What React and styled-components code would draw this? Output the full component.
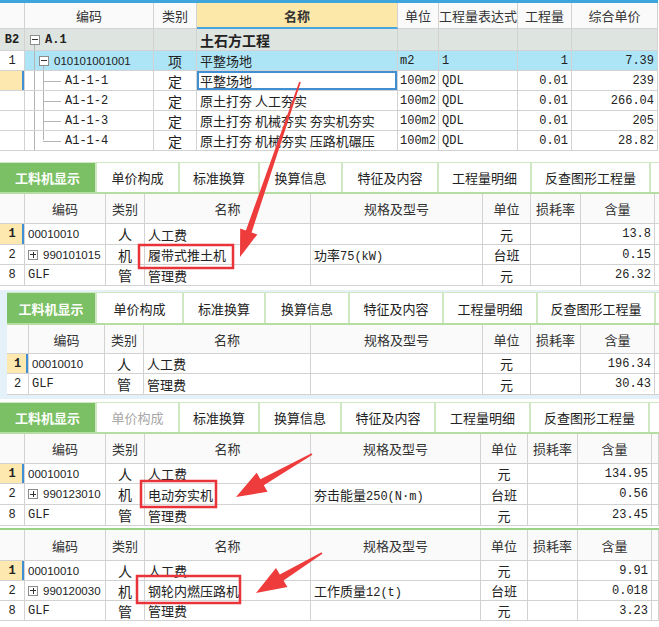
import React from "react"
import styled, { createGlobalStyle } from "styled-components"

const CJK = `"Noto Sans CJK SC", "Noto Sans", sans-serif`
const MONO = `"Liberation Mono", "Noto Sans CJK SC", monospace`
const SANS = `"Liberation Sans", Arial, sans-serif`

const GlobalStyle = createGlobalStyle`
  body { margin: 0; background: #fff; }
`

/* page + generic grid parts */
const Page = styled.div`
  position: relative;
  width: 659px;
  height: 627px;
  overflow: hidden;
  background: #fff;
  color: #222;
  font-family: ${CJK};
  font-size: 13px;
`

const Row = styled.div`
  display: grid;
  grid-template-columns: ${p => p.$cols};
  height: ${p => p.$h}px;
  background: ${p => p.$bg || "transparent"};
`

const Cell = styled.div`
  box-sizing: border-box;
  position: relative;
  display: flex;
  align-items: center;
  justify-content: ${p => (p.$align === "right" ? "flex-end" : p.$align === "center" ? "center" : "flex-start")};
  padding: 0 ${p => (p.$pad !== undefined ? p.$pad : 3)}px;
  border-right: 1px solid #d2d2d2;
  border-bottom: 1px solid #d2d2d2;
  background: ${p => p.$bg || "transparent"};
  font-family: ${p => (p.$mono ? MONO : p.$sans ? SANS : CJK)};
  font-size: ${p => (p.$size ? p.$size : p.$sans ? 11.5 : p.$mono ? 12 : 13)}px;
  font-weight: ${p => (p.$bold ? 700 : 400)};
  color: ${p => p.$color || "#222"};
  white-space: nowrap;
  overflow: hidden;
  box-shadow: ${p => (p.$selected ? "inset 0 0 0 2px #3f8fd2" : p.$mark ? "inset -2px 0 0 #3f8fd2" : "none")};
`

const HeadCell = styled(Cell)`
  justify-content: center;
  background: ${p => (p.$hl ? "#fce8a8" : "#fafafa")};
  font-weight: ${p => (p.$hl ? 700 : 400)};
  border-bottom: ${p => (p.$hl ? "2px solid #4aa5de" : "1px solid #d2d2d2")};
  color: #333;
`

const Mono = styled.span`
  font-family: ${MONO};
  font-size: 12px;
`

/* tree guides in the code column */
const VLine = styled.span`
  position: absolute;
  left: ${p => p.$x}px;
  top: ${p => p.$top}px;
  bottom: ${p => p.$bottom}px;
  width: 1px;
  background: #b4b4b4;
`

const HLine = styled.span`
  position: absolute;
  left: ${p => p.$x}px;
  top: 50%;
  width: ${p => p.$w}px;
  height: 1px;
  background: #b4b4b4;
`

const Toggle = styled.span`
  position: relative;
  flex: none;
  box-sizing: border-box;
  width: 10px;
  height: 10px;
  margin-right: 5px;
  border: 1px solid #8c8c8c;
  background: #fff;
  &::before {
    content: "";
    position: absolute;
    left: 1px;
    right: 1px;
    top: 3.5px;
    height: 1px;
    background: #333;
  }
  &::after {
    content: "";
    display: ${p => (p.$plus ? "block" : "none")};
    position: absolute;
    top: 1px;
    bottom: 1px;
    left: 3.5px;
    width: 1px;
    background: #333;
  }
`

/* top grid */
const TOP_COLS = "25px 129px 43px 201px 41px 79px 54px 1fr"

const TopGrid = styled.div`
  border-top: 3px solid #3ea6dd;
  margin-right: 1px;
`

const topRows = [
  { code: "A1-1-1", name: "平整场地", expr: "0.01", price: "239", selected: true },
  { code: "A1-1-2", name: "原土打夯 人工夯实", expr: "0.01", price: "266.04" },
  { code: "A1-1-3", name: "原土打夯 机械夯实 夯实机夯实", expr: "0.01", price: "205" },
  { code: "A1-1-4", name: "原土打夯 机械夯实 压路机碾压", expr: "0.01", price: "28.82", last: true },
]

function Top() {
  return (
    <TopGrid>
      <Row $cols={TOP_COLS} $h={26}>
        <HeadCell />
        <HeadCell>编码</HeadCell>
        <HeadCell>类别</HeadCell>
        <HeadCell $hl>名称</HeadCell>
        <HeadCell>单位</HeadCell>
        <HeadCell $pad={0}>工程量表达式</HeadCell>
        <HeadCell>工程量</HeadCell>
        <HeadCell>综合单价</HeadCell>
      </Row>
      <Row $cols={TOP_COLS} $h={22} $bg="#dee4e0">
        <Cell $mono $bold $align="center" $pad={0}>B2</Cell>
        <Cell $mono $bold $pad={5}>
          <VLine $x={9} $top={16} $bottom={-1} />
          <Toggle />A.1
        </Cell>
        <Cell />
        <Cell $bold $size={14}>土石方工程</Cell>
        <Cell /><Cell /><Cell /><Cell />
      </Row>
      <Row $cols={TOP_COLS} $h={20} $bg="#ade5f7">
        <Cell $mono $align="center" $bg="#fff">1</Cell>
        <Cell $sans $pad={14}>
          <VLine $x={9} $top={0} $bottom={-1} />
          <VLine $x={18} $top={15} $bottom={-1} />
          <Toggle />010101001001
        </Cell>
        <Cell $align="center" $size={14}>项</Cell>
        <Cell>平整场地</Cell>
        <Cell $mono $pad={2}>m2</Cell>
        <Cell $mono>1</Cell>
        <Cell $mono $align="right">1</Cell>
        <Cell $mono $align="right">7.39</Cell>
      </Row>
      {topRows.map(r => (
        <Row key={r.code} $cols={TOP_COLS} $h={20}>
          <Cell $bg={r.selected ? "#fde8b0" : "transparent"} $mark={r.selected} />
          <Cell $mono $pad={40}>
            <VLine $x={9} $top={0} $bottom={-1} />
            <VLine $x={18} $top={0} $bottom={r.last ? 10 : -1} />
            <HLine $x={18} $w={18} />
            {r.code}
          </Cell>
          <Cell $align="center" $size={14}>定</Cell>
          <Cell $selected={r.selected}>{r.name}</Cell>
          <Cell $mono $pad={2}>100m2</Cell>
          <Cell $mono>QDL</Cell>
          <Cell $mono $align="right">{r.expr}</Cell>
          <Cell $mono $align="right">{r.price}</Cell>
        </Row>
      ))}
    </TopGrid>
  )
}

/* tab bar */
const TabBar = styled.div`
  display: flex;
  box-sizing: border-box;
  height: ${p => p.$h}px;
  margin-top: ${p => p.$top || 0}px;
  border-top: 1px solid #cfe8c3;
  border-bottom: 2px solid #b6dea3;
  background: #fff;
`

const Tab = styled.div`
  flex: none;
  box-sizing: border-box;
  display: flex;
  align-items: center;
  justify-content: center;
  width: ${p => p.$w}px;
  border-right: 2px solid #cfe8c3;
  background: ${p => (p.$active ? "#7bc064" : "transparent")};
  color: ${p => (p.$active ? "#fff" : p.$dim ? "#a8a8a8" : "#222")};
  font-weight: ${p => (p.$active ? 700 : 400)};
  font-size: 13px;
`

const TAB_LABELS = ["工料机显示", "单价构成", "标准换算", "换算信息", "特征及内容", "工程量明细", "反查图形工程量"]

function Tabs({ widths, h, top, dimSecond }) {
  return (
    <TabBar $h={h} $top={top}>
      {TAB_LABELS.map((t, i) => (
        <Tab key={t} $w={widths[i]} $active={i === 0} $dim={dimSecond && i === 1}>{t}</Tab>
      ))}
    </TabBar>
  )
}

/* resource (工料机) table */
const Section = styled.div`
  margin-top: ${p => p.$top || 0}px;
  padding: ${p => (p.$inset ? `2px 0 4px ${p.$inset}px` : "0")};
  background: ${p => (p.$inset ? "#e4f1f8" : "transparent")};
  border-top: ${p => (p.$line ? "2px solid #9ad486" : "none")};
`

const Inner = styled.div`
  background: #fff;
`

function Code({ r }) {
  if (r.plus) {
    return (
      <Cell $sans $pad={3}>
        <Toggle $plus />{r.code}
      </Cell>
    )
  }
  return r.code === "GLF" ? <Cell $mono>GLF</Cell> : <Cell $sans>{r.code}</Cell>
}

function ResTable({ cols, headH, heights, rows }) {
  return (
    <div>
      <Row $cols={cols} $h={headH}>
        <HeadCell />
        <HeadCell>编码</HeadCell>
        <HeadCell>类别</HeadCell>
        <HeadCell>名称</HeadCell>
        <HeadCell>规格及型号</HeadCell>
        <HeadCell>单位</HeadCell>
        <HeadCell>损耗率</HeadCell>
        <HeadCell>含量</HeadCell>
        <HeadCell />
      </Row>
      {rows.map((r, i) => (
        <Row key={i} $cols={cols} $h={heights[i]}>
          <Cell $mono $align="center" $pad={0} $bold={r.no === "1"} $bg={r.no === "1" ? "#fde8b0" : "transparent"} $mark={r.no === "1"}>{r.no}</Cell>
          <Code r={r} />
          <Cell $align="center" $size={14}>{r.type}</Cell>
          <Cell>{r.name}</Cell>
          <Cell>
            {r.spec && <span>{r.spec[0]}<Mono>{r.spec[1]}</Mono></span>}
          </Cell>
          <Cell $align="center">{r.unit}</Cell>
          <Cell />
          <Cell $mono $align="right">{r.qty}</Cell>
          <Cell />
        </Row>
      ))}
    </div>
  )
}

const labor = qty => ({ no: "1", code: "00010010", type: "人", name: "人工费", unit: "元", qty })
const mgmt = (no, qty) => ({ no, code: "GLF", type: "管", name: "管理费", unit: "元", qty })

const COLS_A = "25px 81px 39px 166px 172px 48px 50px 74px 1fr"
const COLS_B = "22px 76px 39px 167px 172px 48px 50px 74px 1fr"
const COLS_C = "25px 81px 39px 166px 170px 47px 50px 74px 1fr"

/* red annotations drawn over the screenshot */
const Overlay = styled.svg`
  position: absolute;
  left: 0;
  top: 0;
  pointer-events: none;
`

function arrow(x1, y1, x2, y2, head, half, shaft) {
  const len = Math.hypot(x2 - x1, y2 - y1)
  const ux = (x2 - x1) / len
  const uy = (y2 - y1) / len
  const nx = -uy
  const ny = ux
  const bx = x2 - ux * head
  const by = y2 - uy * head
  const pts = [
    [x1 + nx * 0.8, y1 + ny * 0.8],
    [bx + nx * shaft, by + ny * shaft],
    [bx + nx * half, by + ny * half],
    [x2, y2],
    [bx - nx * half, by - ny * half],
    [bx - nx * shaft, by - ny * shaft],
    [x1 - nx * 0.8, y1 - ny * 0.8],
  ]
  return pts.map(p => p.map(v => v.toFixed(1)).join(",")).join(" ")
}

function Marks() {
  return (
    <Overlay width="659" height="627" viewBox="0 0 659 627">
      <g fill="none" stroke="#e8333a" strokeWidth="2.5">
        <rect x="139" y="245" width="94" height="23" />
        <rect x="141" y="481" width="75" height="26" />
        <rect x="137" y="576" width="103" height="27" />
      </g>
      <g fill="#ee3b3b">
        <polygon points={arrow(300, 82, 240, 257, 27, 9, 3)} />
        <polygon points={arrow(312, 454, 236, 497, 30, 11, 3.5)} />
        <polygon points={arrow(322, 553, 256, 593, 30, 11, 3.5)} />
      </g>
    </Overlay>
  )
}

export default function App() {
  return (
    <Page>
      <GlobalStyle />
      <Top />

      <Tabs widths={[97, 83, 80, 83, 96, 93, 119]} h={32} top={11} />
      <ResTable
        cols={COLS_A}
        headH={30}
        heights={[21, 20, 21]}
        rows={[
          labor("13.8"),
          { no: "2", code: "990101015", plus: true, type: "机", name: "履带式推土机", spec: ["功率", "75(kW)"], unit: "台班", qty: "0.15" },
          mgmt("8", "26.32"),
        ]}
      />

      <Section $top={4} $inset={7}>
        <Inner>
          <Tabs widths={[90, 87, 82, 84, 94, 94, 118]} h={33} />
          <ResTable
            cols={COLS_B}
            headH={29}
            heights={[20, 21]}
            rows={[labor("196.34"), mgmt("2", "30.43")]}
          />
        </Inner>
      </Section>

      <Tabs widths={[97, 83, 80, 82, 94, 95, 119]} h={32} top={3} dimSecond />
      <ResTable
        cols={COLS_C}
        headH={30}
        heights={[20, 21, 21]}
        rows={[
          labor("134.95"),
          { no: "2", code: "990123010", plus: true, type: "机", name: "电动夯实机", spec: ["夯击能量", "250(N·m)"], unit: "台班", qty: "0.56" },
          mgmt("8", "23.45"),
        ]}
      />

      <Section $top={2} $line>
        <ResTable
          cols={COLS_C}
          headH={31}
          heights={[20, 20, 20]}
          rows={[
            labor("9.91"),
            { no: "2", code: "990120030", plus: true, type: "机", name: "钢轮内燃压路机", spec: ["工作质量", "12(t)"], unit: "台班", qty: "0.018" },
            mgmt("8", "3.23"),
          ]}
        />
      </Section>

      <Marks />
    </Page>
  )
}
